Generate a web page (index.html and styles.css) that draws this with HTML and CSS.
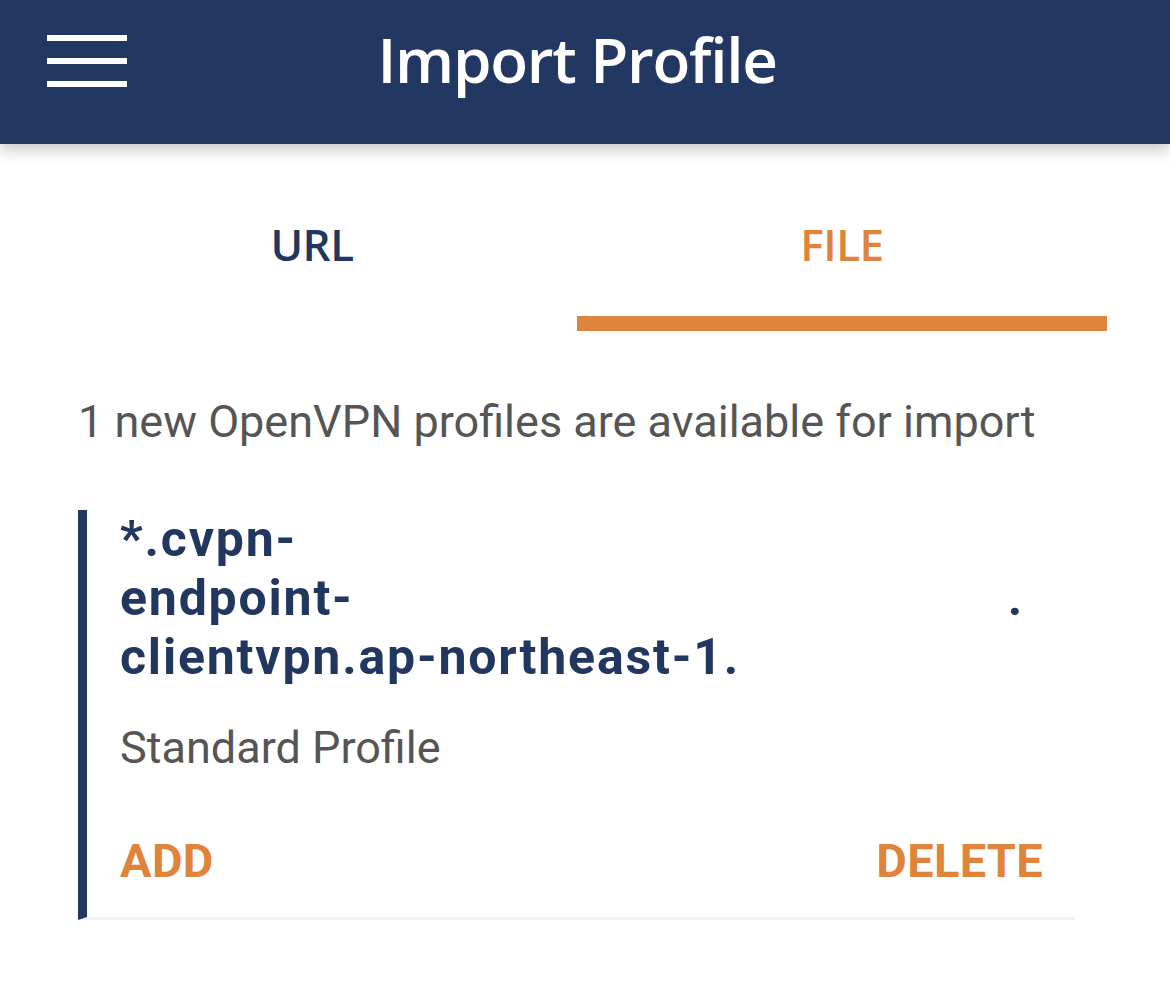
FILE: index.html
```html
<!DOCTYPE html>
<html>
<head>
<meta charset="utf-8">
<link rel="stylesheet" href="styles.css">
</head>
<body>
<header class="topbar">
  <div class="menu" aria-label="menu">
    <span></span><span></span><span></span>
  </div>
  <h1 class="title">Import Profile</h1>
</header>
<main class="content">
  <nav class="tabs">
    <div class="tab">URL</div>
    <div class="tab active">FILE</div>
  </nav>
  <p class="info">1 new OpenVPN profiles are available for import</p>
  <section class="card">
    <div class="name">
      <div class="line">*.cvpn-</div>
      <div class="line line-dot"><span>endpoint-</span><span class="dot">.</span></div>
      <div class="line">clientvpn.ap-northeast-1.</div>
    </div>
    <div class="type">Standard Profile</div>
    <div class="actions">
      <span class="action">ADD</span>
      <span class="action">DELETE</span>
    </div>
  </section>
</main>
</body>
</html>
```
FILE: styles.css
```css
* { box-sizing: border-box; }
html, body { margin: 0; padding: 0; background: #fff; }
body { width: 1170px; height: 997px; overflow: hidden; font-family: Roboto, "Liberation Sans", sans-serif; }

.topbar {
  height: 144px;
  background: #223761;
  display: flex;
  align-items: center;
  position: relative;
  box-shadow: 0 6px 14px rgba(0,0,0,0.22);
  z-index: 2;
  padding-bottom: 22px;
}
.menu {
  margin-left: 47px;
  width: 80px;
  display: flex;
  flex-direction: column;
  gap: 17px;
}
.menu span { display: block; height: 6px; background: #fff; }
.title {
  margin: 0;
  position: absolute;
  left: 0; right: 0;
  top: 23px;
  text-align: center;
  color: #fff;
  font-family: "Open Sans", sans-serif;
  font-weight: 600;
  font-size: 62px;
  line-height: 72px;
  letter-spacing: -1.3px;
  padding-right: 16px;
}

.content { padding: 0 63px 0 47px; }
.tabs {
  display: flex;
  margin-top: 72px;
}
.tab {
  flex: 1;
  text-align: center;
  font-family: "Open Sans", sans-serif;
  font-size: 44px;
  font-weight: 600;
  color: #22375f;
  line-height: 56px;
  letter-spacing: -0.5px;
  border-bottom: 15px solid transparent;
  height: 115px;
}
.tab.active { color: #e0843b; border-bottom-color: #e0843b; }

.info {
  margin: 63px 0 0 31px;
  font-size: 45px;
  line-height: 56px;
  color: #555;
}
.card {
  margin: 60px 32px 0 31px;
  border-left: 9px solid #22375f;
  border-bottom: 3px solid #f3f3f3;
  padding: 0 32px 0 33px;
  height: 410px;
  display: flex;
  flex-direction: column;
}
.name {
  font-weight: 700;
  font-size: 50px;
  line-height: 59px;
  color: #22375f;
  letter-spacing: 1.8px;
}
.line-dot { display: flex; }
.dot { margin-left: auto; margin-right: 19px; }
.type {
  margin-top: 33px;
  font-size: 45px;
  line-height: 56px;
  color: #555;
}
.actions {
  margin-top: auto;
  margin-bottom: 28px;
  display: flex;
  justify-content: space-between;
  font-weight: 700;
  font-size: 47px;
  color: #e0843b;
  line-height: 56px;
  letter-spacing: 0.3px;
}
```
